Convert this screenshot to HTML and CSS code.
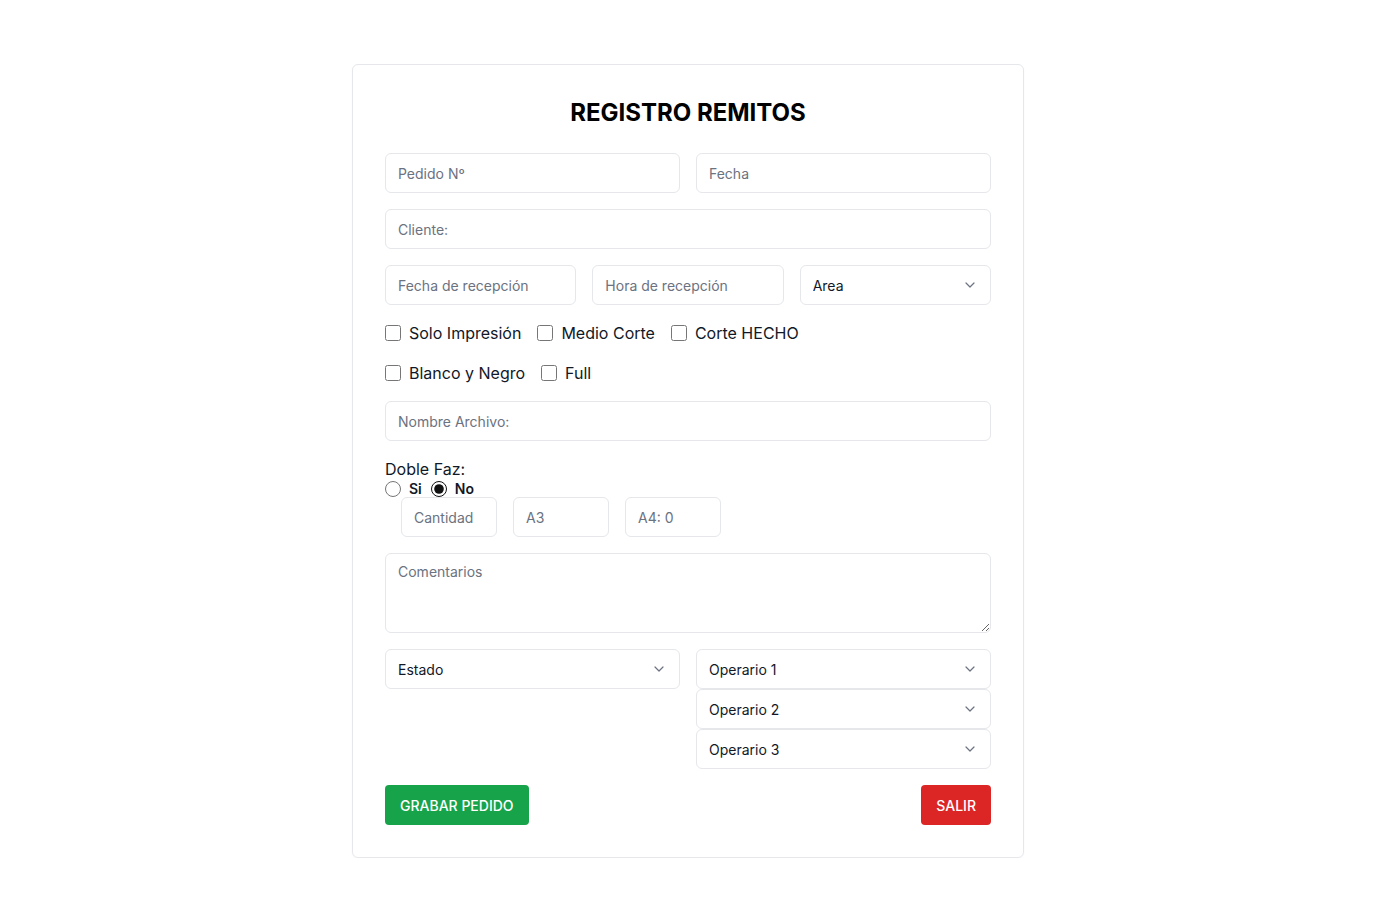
FILE: index.html
```html
<!DOCTYPE html>
<html lang="es">
<head>
<meta charset="utf-8">
<title>Registro Remitos</title>
<link rel="stylesheet" href="styles.css">
</head>
<body>
<main class="page">
  <form class="card">
    <h1 class="title">REGISTRO REMITOS</h1>

    <div class="row cols-2">
      <input class="field" type="text" placeholder="Pedido Nº">
      <input class="field" type="text" placeholder="Fecha">
    </div>

    <input class="field" type="text" placeholder="Cliente:">

    <div class="row cols-3">
      <input class="field" type="text" placeholder="Fecha de recepción">
      <input class="field" type="text" placeholder="Hora de recepción">
      <div class="select-wrap">
        <select class="field select"><option>Area</option></select>
        <svg class="chev" viewBox="0 0 10 6" width="10" height="6"><path d="M1 1l4 4 4-4" fill="none" stroke="#6b7280" stroke-width="1.2" stroke-linecap="round" stroke-linejoin="round"/></svg>
      </div>
    </div>

    <div class="checks">
      <label class="check"><input type="checkbox"> Solo Impresión</label>
      <label class="check"><input type="checkbox"> Medio Corte</label>
      <label class="check"><input type="checkbox"> Corte HECHO</label>
    </div>
    <div class="checks">
      <label class="check"><input type="checkbox"> Blanco y Negro</label>
      <label class="check"><input type="checkbox"> Full</label>
    </div>

    <input class="field" type="text" placeholder="Nombre Archivo:">

    <div class="doble">
      <div class="doble-label">Doble Faz:</div>
      <div class="radios">
        <label class="radio"><input type="radio" name="df"> Si</label>
        <label class="radio"><input type="radio" name="df" checked> No</label>
      </div>
      <div class="smalls">
        <input class="field small" type="text" placeholder="Cantidad">
        <input class="field small" type="text" placeholder="A3">
        <input class="field small" type="text" placeholder="A4: 0">
      </div>
    </div>

    <textarea class="field area" placeholder="Comentarios"></textarea>

    <div class="row cols-2 top">
      <div class="select-wrap">
        <select class="field select"><option>Estado</option></select>
        <svg class="chev" viewBox="0 0 10 6" width="10" height="6"><path d="M1 1l4 4 4-4" fill="none" stroke="#6b7280" stroke-width="1.2" stroke-linecap="round" stroke-linejoin="round"/></svg>
      </div>
      <div class="stack">
        <div class="select-wrap">
          <select class="field select"><option>Operario 1</option></select>
          <svg class="chev" viewBox="0 0 10 6" width="10" height="6"><path d="M1 1l4 4 4-4" fill="none" stroke="#6b7280" stroke-width="1.2" stroke-linecap="round" stroke-linejoin="round"/></svg>
        </div>
        <div class="select-wrap">
          <select class="field select"><option>Operario 2</option></select>
          <svg class="chev" viewBox="0 0 10 6" width="10" height="6"><path d="M1 1l4 4 4-4" fill="none" stroke="#6b7280" stroke-width="1.2" stroke-linecap="round" stroke-linejoin="round"/></svg>
        </div>
        <div class="select-wrap">
          <select class="field select"><option>Operario 3</option></select>
          <svg class="chev" viewBox="0 0 10 6" width="10" height="6"><path d="M1 1l4 4 4-4" fill="none" stroke="#6b7280" stroke-width="1.2" stroke-linecap="round" stroke-linejoin="round"/></svg>
        </div>
      </div>
    </div>

    <div class="actions">
      <button type="button" class="btn btn-green">GRABAR PEDIDO</button>
      <button type="button" class="btn btn-red">SALIR</button>
    </div>
  </form>
</main>
</body>
</html>
```
FILE: styles.css
```css
* { box-sizing: border-box; }
html, body { margin: 0; padding: 0; background: #ffffff; }
body {
  font-family: Inter, "Liberation Sans", sans-serif;
  color: #111827;
}
.page {
  display: flex;
  justify-content: center;
  padding-top: 64px;
}
.card {
  width: 672px;
  border: 1px solid #e5e7eb;
  border-radius: 6px;
  padding: 32px 32px 32px;
  display: flex;
  flex-direction: column;
  gap: 16px;
  box-shadow: 0 1px 2px rgba(0,0,0,0.03);
}
.title {
  margin: 0 0 8px;
  font-size: 24px;
  line-height: 32px;
  font-weight: 700;
  text-align: center;
  color: #000;
}
.row { display: grid; gap: 16px; }
.cols-2 { grid-template-columns: 1fr 1fr; }
.cols-3 { grid-template-columns: 1fr 1fr 1fr; }
.top { align-items: start; }
.field {
  display: block;
  width: 100%;
  height: 40px;
  border: 1px solid #e5e7eb;
  border-radius: 6px;
  padding: 0 12px;
  font-family: inherit;
  font-size: 14px;
  color: #111827;
  background: #fff;
  outline: none;
}
.field::placeholder { color: #6b7280; opacity: 1; }
.select-wrap { position: relative; }
.select {
  appearance: none;
  -webkit-appearance: none;
  color: #111827;
}
.chev {
  position: absolute;
  right: 16px;
  top: 17px;
  pointer-events: none;
}
.checks {
  display: flex;
  gap: 16px;
  height: 24px;
  align-items: center;
}
.check, .radio {
  display: flex;
  align-items: center;
  gap: 8px;
  font-size: 16px;
  line-height: 24px;
  color: #111827;
}
.check input {
  margin: 0;
  width: 16px;
  height: 16px;
}
.doble { display: flex; flex-direction: column; }
.doble-label {
  font-size: 16px;
  line-height: 24px;
}
.radios {
  display: flex;
  gap: 9px;
  height: 16px;
  align-items: center;
}
.radio {
  font-size: 14px;
  font-weight: 600;
  line-height: 16px;
  gap: 8px;
}
.radio input {
  margin: 0;
  width: 16px;
  height: 16px;
  accent-color: #111111;
}
.smalls {
  display: flex;
  gap: 16px;
  padding-left: 16px;
}
.small { width: 96px; }
.area {
  height: 80px;
  padding: 8px 12px;
  resize: vertical;
  line-height: 20px;
}
.stack { display: flex; flex-direction: column; }
.actions {
  display: flex;
  justify-content: space-between;
}
.btn {
  height: 40px;
  padding: 0 15px;
  border: none;
  border-radius: 4px;
  color: #fff;
  font-family: inherit;
  font-size: 14px;
  font-weight: 500;
}
.btn-green { background: #16a34a; }
.btn-red { background: #dc2626; }
```
